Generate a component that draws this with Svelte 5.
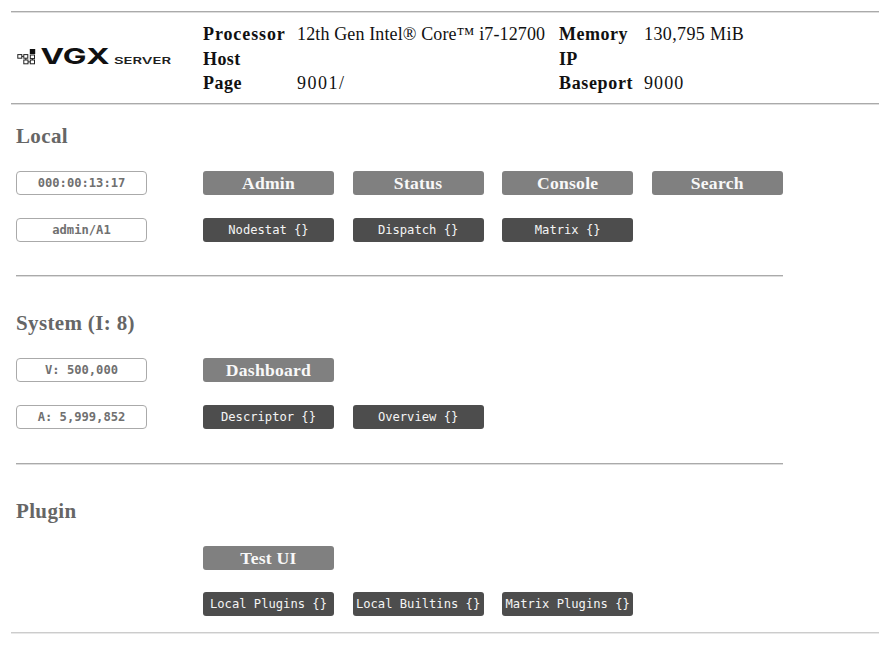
<script>
  // Each cell is [text, letter spacing in px].
  const info = [
    [['Processor', 0.9], ['12th Gen Intel® Core™ i7-12700', 0.13], ['Memory', 0.5], ['130,795 MiB', 0.38]],
    [['Host', 0.4], ['', 0], ['IP', 0.3], ['', 0]],
    [['Page', 0.5], ['9001/', 1.5], ['Baseport', 0.65], ['9000', 1.1]]
  ];
  const sections = [
    {
      title: 'Local',
      rows: [
        { badge: '000:00:13:17', kind: 'page', items: ['Admin', 'Status', 'Console', 'Search'] },
        { badge: 'admin/A1', kind: 'json', items: ['Nodestat {}', 'Dispatch {}', 'Matrix {}'] }
      ]
    },
    {
      title: 'System (I: 8)',
      rows: [
        { badge: 'V: 500,000', kind: 'page', items: ['Dashboard'] },
        { badge: 'A: 5,999,852', kind: 'json', items: ['Descriptor {}', 'Overview {}'] }
      ]
    },
    {
      title: 'Plugin',
      rows: [
        { badge: '', kind: 'page', items: ['Test UI'] },
        { badge: '', kind: 'json', items: ['Local Plugins {}', 'Local Builtins {}', 'Matrix Plugins {}'] }
      ]
    }
  ];
</script>

<div class="screen">
  <header>
    <svg class="logo" width="156" height="30" viewBox="0 -5 156 30">
      <rect x="13.8" y="2" width="5.4" height="5" fill="#111" />
      <g fill="none" stroke="#222" stroke-width="1">
        <rect x="1.8" y="7.6" width="4" height="3.6" />
        <rect x="7.8" y="7.6" width="4" height="3.6" />
        <rect x="14.3" y="8" width="4.2" height="3.6" />
        <rect x="7.8" y="13" width="4.2" height="3.8" />
        <rect x="14.3" y="13" width="4.2" height="3.8" />
        <path d="M5.8 9.4H7.8M9.8 11.2V13M12 14.9H14.3M16.4 11.6V13" />
      </g>
      <text class="brand" x="24.5" y="17" textLength="69" lengthAdjust="spacingAndGlyphs">VGX</text>
      <text class="sub" x="98" y="17" textLength="57" lengthAdjust="spacingAndGlyphs">SERVER</text>
    </svg>
    <div class="info">
      {#each info as line}
        {#each line as [text, spacing], i}
          <span class:label={i % 2 === 0} style:letter-spacing="{spacing}px">{text}</span>
        {/each}
      {/each}
    </div>
  </header>
  <main>
    {#each sections as section}
      <section>
        <h2>{section.title}</h2>
        {#each section.rows as row}
          <div class="row">
            <div class="badge" class:empty={!row.badge}>{row.badge}</div>
            {#each row.items as item}
              <button class={row.kind}>{item}</button>
            {/each}
          </div>
        {/each}
      </section>
    {/each}
  </main>
  <footer></footer>
</div>

<style>
  :global(body) {
    background: #fff;
  }
  .screen {
    box-sizing: border-box;
    height: 653px;
    padding: 11px 0 0 11px;
    overflow: hidden;
    font-family: 'Liberation Serif', serif;
    color: #111;
  }
  header {
    box-sizing: border-box;
    height: 93px;
    display: flex;
    align-items: flex-start;
    border-top: 1px solid #aaa;
    border-bottom: 1px solid #aaa;
    box-shadow: inset 0 1px #ddd, 0 1px #ddd;
    padding-left: 5px;
  }
  .logo {
    flex: none;
    width: 156px;
    height: 30px;
    margin: 30px 31px 0 0;
  }
  .brand {
    font: 700 22px Inter, sans-serif;
    fill: #111;
  }
  .sub {
    font: 600 8.5px Inter, sans-serif;
    fill: #222;
  }
  .info {
    display: grid;
    grid-template-columns: 94px 262px 85px 150px;
    grid-auto-rows: 24.5px;
    line-height: 24.5px;
    margin-top: 10px;
    font-size: 18px;
    white-space: nowrap;
  }
  .label {
    font-weight: bold;
  }
  main {
    width: 767px;
    margin-left: 5px;
  }
  section {
    box-sizing: border-box;
    height: 187.3px;
    padding-top: 19px;
  }
  section:first-child {
    height: 171.3px;
  }
  section:not(:first-child) {
    border-top: 1px solid #aaa;
    box-shadow: inset 0 1px #ddd;
    padding-top: 34px;
  }
  section:last-child {
    height: 169.7px;
  }
  h2 {
    margin: 0 0 22px;
    font-size: 21px;
    line-height: 26px;
    letter-spacing: 0.35px;
    color: #666;
  }
  .row {
    display: flex;
    gap: 18.6px;
    margin-bottom: 22.7px;
  }
  .badge,
  button {
    box-sizing: border-box;
    flex: none;
    width: 131px;
    height: 24px;
    padding: 0;
    border: 0;
    border-radius: 3px;
    text-align: center;
    white-space: nowrap;
    font: 12.15px/24px 'DejaVu Sans Mono', monospace;
  }
  .badge {
    margin-right: 37.4px;
    border: 1px solid #aaa;
    border-radius: 4px;
    line-height: 23px;
    font-weight: bold;
    color: #707070;
  }
  .empty {
    visibility: hidden;
  }
  .page {
    background: #808080;
    color: #f8f8f8;
    font: bold 17.6px/24px 'Liberation Serif', serif;
    letter-spacing: 0.25px;
  }
  .json {
    background: #4d4d4d;
    color: #f5f5f5;
  }
  footer {
    border-top: 1px solid #ccc;
    box-shadow: inset 0 1px #e8e8e8;
    height: 1px;
  }
</style>
